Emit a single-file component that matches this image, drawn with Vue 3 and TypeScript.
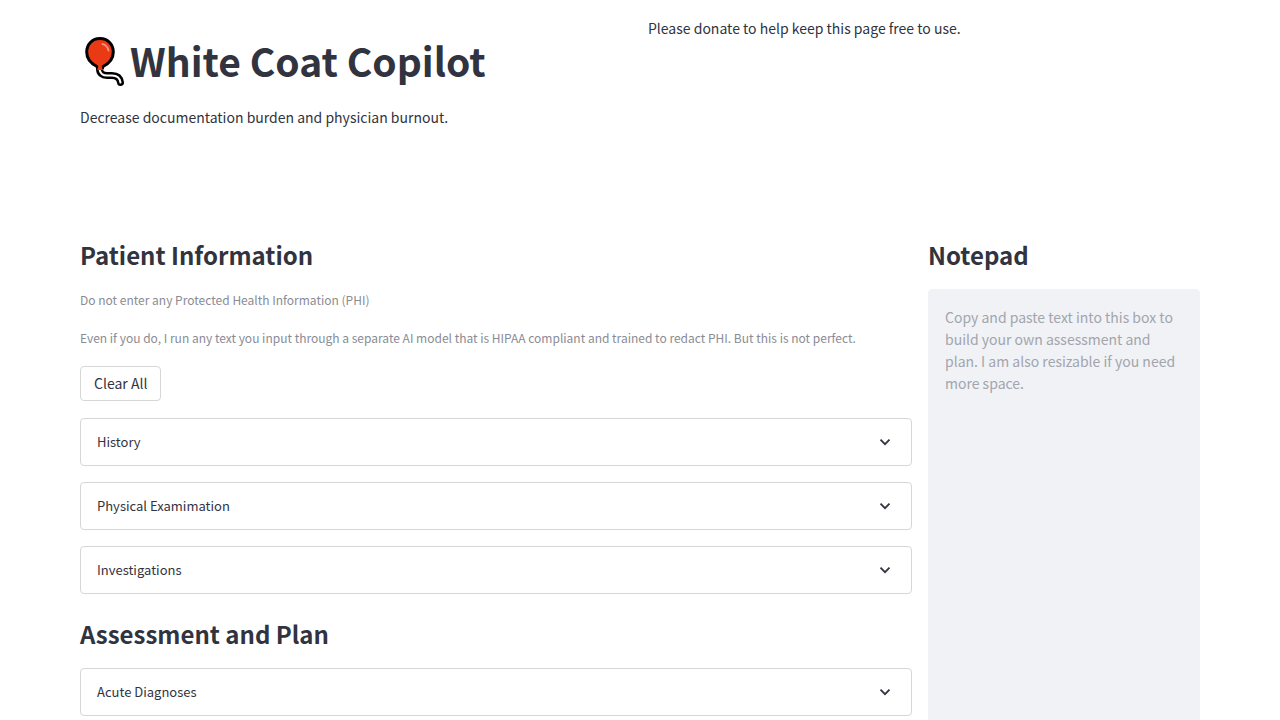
<script setup lang="ts">
import { ref } from 'vue'

interface Panel {
  title: string
}

const patientPanels: Panel[] = [
  { title: 'History' },
  { title: 'Physical Examimation' },
  { title: 'Investigations' },
]
const planPanels: Panel[] = [{ title: 'Acute Diagnoses' }]

const entries = ref<Record<string, string>>({})
const notes = ref('')

function clearAll(): void {
  entries.value = {}
}
</script>

<template>
  <main class="page">
    <header class="intro">
      <div class="brand">
        <h1>
          <svg class="balloon" viewBox="0 0 50 56" aria-hidden="true">
            <path class="string-edge" d="M19.500 37 C19.500 41 22 43.500 27 43.500 L32 43.500 Q39.500 43.500 40.500 50.500" />
            <path
              class="bulb"
              d="M20 6.500 C28 6.500 33.300 12.500 33.300 20 C33.300 27 28 32 23 34.500 L22.500 36.500 L17.500 36.500 L17 34.500 C12 32 6.700 27 6.700 20 C6.700 12.500 12 6.500 20 6.500 Z"
            />
            <path class="string-core" d="M19.800 38.500 C20.500 41.500 23 43.500 27 43.500 L32 43.500 Q39.500 43.500 40.500 50.500" />
            <path class="knot" d="M18.500 34 L21.500 34 L22.800 38 L17.200 38 Z" />
            <path class="shine" d="M22.500 12 Q27.500 13.500 28.500 18.500" />
          </svg>
          <span>White Coat Copilot</span>
        </h1>
        <p>Decrease documentation burden and physician burnout.</p>
      </div>
      <p class="donate">Please donate to help keep this page free to use.</p>
    </header>

    <div class="workspace">
      <section class="records">
        <h2>Patient Information</h2>
        <p class="caption">Do not enter any Protected Health Information (PHI)</p>
        <p class="caption">
          Even if you do, I run any text you input through a separate AI model that is HIPAA compliant and trained to redact PHI. But this is not perfect.
        </p>
        <button type="button" class="clear" @click="clearAll">Clear All</button>
        <div class="panels">
          <details v-for="panel in patientPanels" :key="panel.title">
            <summary>
              <span>{{ panel.title }}</span>
              <svg class="chevron" viewBox="0 0 12 12" aria-hidden="true"><path d="M1.500 3.700 L6 8.200 L10.500 3.700" /></svg>
            </summary>
            <textarea v-model="entries[panel.title]" :aria-label="panel.title"></textarea>
          </details>
        </div>
        <h2 class="plan">Assessment and Plan</h2>
        <div class="panels">
          <details v-for="panel in planPanels" :key="panel.title">
            <summary>
              <span>{{ panel.title }}</span>
              <svg class="chevron" viewBox="0 0 12 12" aria-hidden="true"><path d="M1.500 3.700 L6 8.200 L10.500 3.700" /></svg>
            </summary>
            <textarea v-model="entries[panel.title]" :aria-label="panel.title"></textarea>
          </details>
        </div>
      </section>

      <section class="notepad">
        <h2><label for="notes">Notepad</label></h2>
        <textarea
          id="notes"
          v-model="notes"
          placeholder="Copy and paste text into this box to build your own assessment and plan. I am also resizable if you need more space."
        ></textarea>
      </section>
    </div>
  </main>
</template>

<style>
body {
  margin: 0;
}
</style>

<style scoped>
.page {
  box-sizing: border-box;
  height: 100vh;
  overflow-y: auto;
  scrollbar-width: none;
  padding: 16px 80px 0;
  background: #fff;
  color: #31333f;
  font-family: "Source Sans Pro", "Noto Sans CJK SC", sans-serif;
  font-size: 14px;
  line-height: 24px;
}

h1,
h2,
p {
  margin: 0;
}

.intro {
  display: grid;
  grid-template-columns: 1fr 1fr;
  gap: 16px;
  min-height: 216px;
}

h1 {
  display: flex;
  align-items: center;
  padding: 16px 0 17px;
  font-size: 39px;
  line-height: 52px;
  font-weight: 700;
}

.brand {
  white-space: nowrap;
}

.balloon {
  flex: none;
  width: 50px;
  height: 56px;
}

.string-edge,
.string-core,
.shine {
  fill: none;
  stroke-linecap: round;
}

.string-edge {
  stroke: #000;
  stroke-width: 7;
}

.string-core {
  stroke: #fff;
  stroke-width: 2;
}

.bulb {
  fill: #ea3a15;
  stroke: #000;
  stroke-width: 3;
  stroke-linejoin: round;
}

.knot {
  fill: #ea3a15;
}

.shine {
  stroke: #f58a78;
  stroke-width: 2;
}

.workspace {
  display: grid;
  grid-template-columns: minmax(0, 832fr) minmax(0, 272fr);
  gap: 16px;
}

h2 {
  padding: 7px 0 18px;
  font-size: 24px;
  line-height: 32px;
  font-weight: 600;
}

.caption {
  margin-bottom: 16px;
  color: #8a8c94;
  font-size: 12px;
  line-height: 22px;
}

.clear {
  display: block;
  height: 35px;
  margin: 17px 0;
  padding: 0 13px 2px;
  border: 1px solid #d6d6d9;
  border-radius: 4px;
  background: #fff;
  color: inherit;
  font: inherit;
}

.panels {
  display: grid;
  gap: 16px;
}

details {
  border: 1px solid #d6d6d9;
  border-radius: 4px;
}

summary {
  display: flex;
  align-items: center;
  justify-content: space-between;
  padding: 12px 20px 12px 16px;
  font-size: 13px;
  line-height: 22px;
  list-style: none;
  cursor: pointer;
}

.chevron {
  width: 12px;
  height: 12px;
}

.chevron path {
  fill: none;
  stroke: #31333f;
  stroke-width: 1.800;
}

details textarea {
  display: block;
  box-sizing: border-box;
  width: calc(100% - 32px);
  margin: 0 16px 16px;
}

.plan {
  padding-top: 24px;
}

.notepad textarea {
  display: block;
  box-sizing: border-box;
  width: 100%;
  height: 600px;
  padding: 16px;
  border: 1px solid #f0f2f6;
  border-radius: 4px;
  background: #f0f2f6;
  color: inherit;
  font: inherit;
  line-height: 22px;
  resize: vertical;
}

.notepad textarea::placeholder {
  color: #a3a5ad;
  opacity: 1;
}
</style>
